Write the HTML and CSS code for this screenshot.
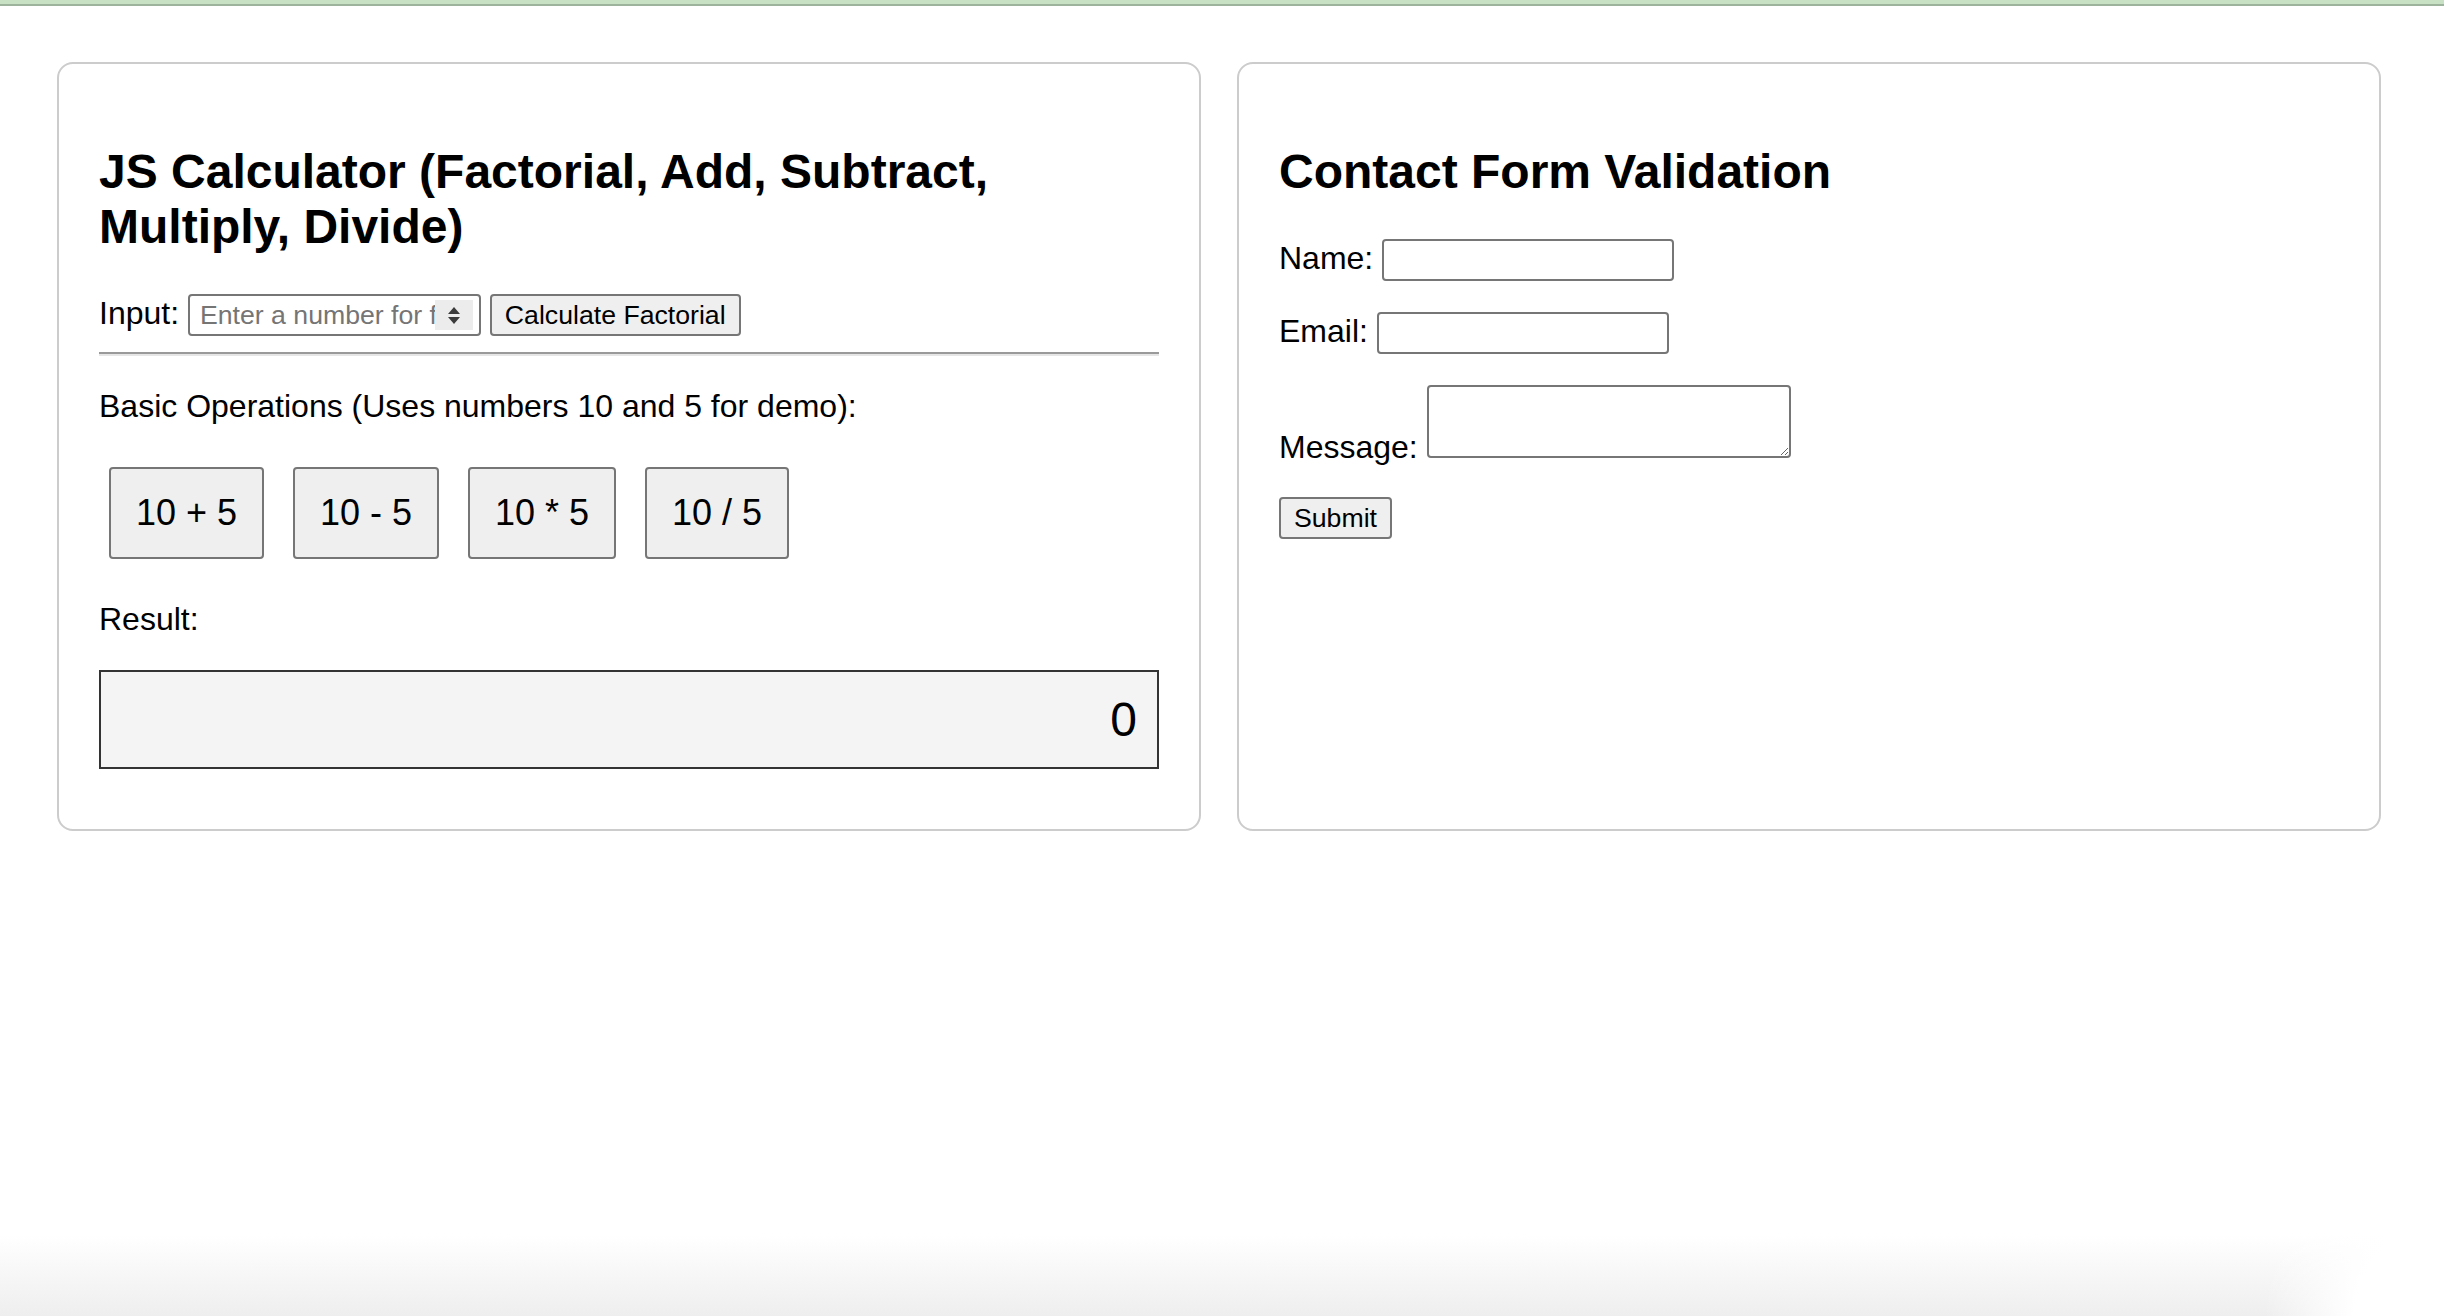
FILE: index.html
```html
<!DOCTYPE html>
<html lang="en">
<head>
<meta charset="utf-8">
<title>JS Calculator &amp; Contact Form</title>
<link rel="stylesheet" href="styles.css">
</head>
<body>
<div class="topbar"></div>
<main class="grid">
  <section class="card">
    <h2>JS Calculator (Factorial, Add, Subtract, Multiply, Divide)</h2>
    <div class="row">Input: <span class="num"><input class="num-input" type="text" placeholder="Enter a number for factorial"><span class="spin"><svg width="16" height="22" viewBox="0 0 16 22"><path d="M8 3 L14 10 L2 10 Z" fill="#3b3b3b"/><path d="M2 13 L14 13 L8 20 Z" fill="#3b3b3b"/></svg></span></span> <button class="btn">Calculate Factorial</button></div>
    <hr class="rule">
    <p class="para">Basic Operations (Uses numbers 10 and 5 for demo):</p>
    <div class="ops">
      <button class="op">10 + 5</button>
      <button class="op">10 - 5</button>
      <button class="op">10 * 5</button>
      <button class="op">10 / 5</button>
    </div>
    <p class="para">Result:</p>
    <div class="result">0</div>
  </section>
  <section class="card">
    <h2>Contact Form Validation</h2>
    <p class="para form-row">Name: <input class="field" type="text"></p>
    <p class="para form-row">Email: <input class="field field-email" type="email"></p>
    <p class="para form-row">Message: <textarea class="area"></textarea></p>
    <button class="btn">Submit</button>
  </section>
</main>
</body>
</html>
```

FILE: styles.css
```css
* {
  box-sizing: border-box;
}

html {
  height: 100%;
  background:
    radial-gradient(circle at right bottom, #ffffff 0, #ffffff 90px, rgba(255, 255, 255, 0) 180px),
    linear-gradient(to bottom, #ffffff 0, #ffffff 1236px, #eeeeee 1316px);
  background-repeat: no-repeat;
}

body {
  margin: 0;
  font-family: "Liberation Sans", Arial, sans-serif;
  font-size: 32px;
  color: #000;
}

.topbar {
  height: 6px;
  background: #c8e0c4;
  border-bottom: 2px solid #9db39b;
}

.grid {
  display: grid;
  grid-template-columns: 1144px 1144px;
  column-gap: 36px;
  padding: 56px 63px 0 57px;
  align-items: stretch;
}

.card {
  border: 2px solid #cccccc;
  border-radius: 16px;
  padding: 40px;
}

h2 {
  font-size: 48px;
  font-weight: bold;
  margin: 40px 0;
}

.para {
  margin: 32px 0;
}

.form-row {
  margin: 31px 0;
}

.row {
  margin: 0;
}

.num {
  display: inline-flex;
  align-items: center;
  width: 293px;
  height: 42px;
  border: 2px solid #767676;
  border-radius: 4px;
  background: #fff;
  vertical-align: baseline;
}

.num-input {
  flex: 1;
  min-width: 0;
  border: 0;
  outline: none;
  padding: 0 0 0 10px;
  font-family: "Liberation Sans", Arial, sans-serif;
  font-size: 26.67px;
  background: transparent;
}

.num-input::placeholder {
  color: #757575;
}

.spin {
  display: flex;
  align-items: center;
  justify-content: center;
  width: 38px;
  height: 30px;
  margin-right: 6px;
  background: #ececec;
}

.btn {
  font-family: "Liberation Sans", Arial, sans-serif;
  font-size: 26.67px;
  height: 42px;
  padding: 2px 13px;
  border: 2px solid #767676;
  border-radius: 4px;
  background: #efefef;
  color: #000;
}

.rule {
  margin: 16px 0;
  height: 0;
  border: 0;
  border-top: 2px solid #9a9a9a;
  border-bottom: 2px solid #e6e6e6;
}

.ops {
  margin: 0;
}

.op {
  font-family: "Liberation Sans", Arial, sans-serif;
  font-size: 36px;
  margin: 10px;
  padding: 23px 25px;
  border: 2px solid #767676;
  border-radius: 4px;
  background: #efefef;
  color: #000;
}

.result {
  border: 2px solid #333333;
  background: #f4f4f4;
  padding: 20px;
  text-align: right;
  font-size: 48px;
  margin-bottom: 20px;
}

.field {
  width: 292px;
  height: 42px;
  border: 2px solid #767676;
  border-radius: 4px;
  padding: 2px 4px;
  font-family: "Liberation Sans", Arial, sans-serif;
  font-size: 26.67px;
}

.area {
  width: 364px;
  height: 73px;
  border: 2px solid #767676;
  border-radius: 4px;
  padding: 4px;
  font-family: "Liberation Mono", monospace;
  font-size: 26.67px;
  vertical-align: baseline;
}
```
